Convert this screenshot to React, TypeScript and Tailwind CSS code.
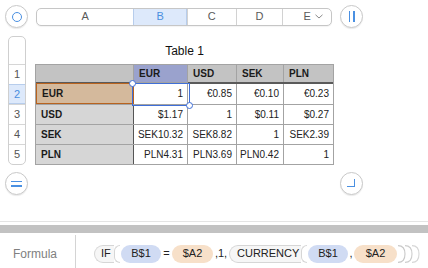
import React from "react";

function CircleBtn({ children, className = "" }: { children: React.ReactNode; className?: string }) {
  return (
    <div
      className={
        "w-[23px] h-[23px] rounded-full border border-[#c9c9c9] bg-white shadow-[0_1px_1px_rgba(0,0,0,0.08)] flex items-center justify-center shrink-0 " +
        className
      }
    >
      {children}
    </div>
  );
}

const cols = ["A", "B", "C", "D", "E"];
const colW = ["w-[97px]", "w-[54px]", "w-[49px]", "w-[47px]", "w-[49px]"];

const header = ["", "EUR", "USD", "SEK", "PLN"];
const rows = [
  ["EUR", "1", "€0.85", "€0.10", "€0.23"],
  ["USD", "$1.17", "1", "$0.11", "$0.27"],
  ["SEK", "SEK10.32", "SEK8.82", "1", "SEK2.39"],
  ["PLN", "PLN4.31", "PLN3.69", "PLN0.42", "1"],
];
const tcols = "grid grid-cols-[98px_54px_49px_47px_49px]";

function OpenParen() {
  return <span className="w-[6px] h-[18px] border border-r-0 border-[#d6d6d6] rounded-l-full bg-white shrink-0" />;
}

export default function App() {
  return (
    <div className="w-[428px] h-[268px] bg-white flex flex-col overflow-hidden font-['Liberation_Sans',Arial,sans-serif] text-[#1a1a1a]">
      <div className="h-[221px] shrink-0 flex flex-col">
        {/* top bar */}
        <div className="flex items-center pt-[5px] pl-[5px]">
          <CircleBtn>
            <div className="w-[10px] h-[10px] rounded-full border-[1.5px] border-[#4a90e2]" />
          </CircleBtn>
          <div className="ml-[8px] w-[296px] h-[18px] rounded-[5px] border border-[#c6c6c6] bg-white flex text-[11px] text-[#5a5a5a] overflow-hidden shadow-[0_1px_1px_rgba(0,0,0,0.05)]">
            {cols.map((c, i) => (
              <div
                key={c}
                className={
                  colW[i] +
                  " h-full flex items-center justify-center leading-none " +
                  (i > 0 ? "border-l border-[#d2d2d2] " : "") +
                  (c === "B" ? "bg-[#dde9fb] text-[#4a8fe0] border-l-[#b7cdec] border-r border-r-[#b7cdec]" : "")
                }
              >
                {c === "E" ? (
                  <span className="flex items-center gap-[4px] pl-[12px]">
                    E
                    <svg width="8" height="5" viewBox="0 0 8 5">
                      <path d="M0.5 0.8 L4 4 L7.5 0.8" fill="none" stroke="#8a8a8a" strokeWidth="1" />
                    </svg>
                  </span>
                ) : (
                  c
                )}
              </div>
            ))}
          </div>
          <CircleBtn className="ml-[8px]">
            <div className="flex gap-[3px]">
              <div className="w-[1.5px] h-[11px] bg-[#4a90e2]" />
              <div className="w-[1.5px] h-[11px] bg-[#4a90e2]" />
            </div>
          </CircleBtn>
        </div>

        {/* body */}
        <div className="flex pl-[8px] mt-[8px]">
          {/* row headers */}
          <div className="w-[18px] rounded-[5px] border border-[#cfcfcf] bg-white flex flex-col text-[11px] text-[#555] overflow-hidden">
            <div className="h-[27px]" />
            {[1, 2, 3, 4, 5].map((n) => (
              <div
                key={n}
                className={
                  "h-[20px] flex items-center justify-center border-t leading-none " +
                  (n === 2
                    ? "bg-[#dde9fb] text-[#4a8fe0] border-[#b7cdec] border-b border-b-[#b7cdec]"
                    : "border-[#d6d6d6]")
                }
              >
                {n}
              </div>
            ))}
          </div>

          {/* table */}
          <div className="ml-[9px] flex flex-col">
            <div className="h-[28px] flex items-center justify-center text-[12px] text-[#111] pt-[1px]">Table 1</div>
            <div className="relative border border-[#a3a3a3] text-[10px] leading-none">
              <div className={tcols + " h-[19px] bg-[#c3c3c3] border-b-2 border-[#5a5a5a]"}>
                {header.map((h, i) => (
                  <div
                    key={i}
                    className={
                      "flex items-center pl-[5px] font-bold " +
                      (i < 4 ? "border-r border-[#a3a3a3] " : "") +
                      (i === 1 ? "bg-[#9aa2cd] border border-[#3a5fd6] -my-[1px] -ml-[1px]" : "")
                    }
                  >
                    {h}
                  </div>
                ))}
              </div>
              {rows.map((r, ri) => (
                <div key={ri} className={tcols + " h-[20px] " + (ri > 0 ? "border-t border-[#a3a3a3]" : "")}>
                  {r.map((v, ci) => (
                    <div
                      key={ci}
                      className={
                        ci === 0
                          ? "flex items-center pl-[5px] font-bold border-r border-[#555] " +
                            (ri === 0 ? "bg-[#d4b99c] border border-[#b8631f] -mt-[1px]" : "bg-[#d6d6d6]")
                          : "flex items-center justify-end pr-[4px] text-[#222] bg-white " +
                            (ci < 4 ? "border-r border-[#a3a3a3]" : "")
                      }
                    >
                      {v}
                    </div>
                  ))}
                </div>
              ))}
              {/* selection */}
              <div className="absolute left-[96px] top-[18px] w-[58px] h-[23px] border border-[#3f6fd8] pointer-events-none">
                <div className="absolute -left-[4px] -top-[4px] w-[7px] h-[7px] rounded-full bg-white border border-[#3f6fd8]" />
                <div className="absolute -right-[4px] -bottom-[4px] w-[7px] h-[7px] rounded-full bg-white border border-[#3f6fd8]" />
              </div>
            </div>
          </div>
        </div>

        {/* bottom buttons */}
        <div className="flex pl-[5px] mt-[7px]">
          <CircleBtn>
            <div className="flex flex-col gap-[3px]">
              <div className="w-[11px] h-[1.5px] bg-[#4a90e2]" />
              <div className="w-[11px] h-[1.5px] bg-[#4a90e2]" />
            </div>
          </CircleBtn>
          <CircleBtn className="ml-[312px]">
            <div className="w-[8px] h-[8px] border-r-[1.5px] border-b-[1.5px] border-[#4a90e2] -mt-[1px] -ml-[1px]" />
          </CircleBtn>
        </div>
      </div>

      {/* divider lines */}
      <div className="h-[1px] shrink-0 bg-[#e4e4e4]" />
      <div className="h-[3px] shrink-0" />
      <div className="h-[8px] shrink-0 bg-[#c2c2c2]" />

      {/* formula bar */}
      <div className="flex-1 flex items-stretch">
        <div className="w-[76px] shrink-0 border-r border-[#d4d4d4] mt-[2px] flex items-center pl-[13px] pt-[5px] text-[12px] text-[#808080]">
          Formula
        </div>
        <div className="flex items-center pl-[18px] pt-[6px] text-[11px] text-[#222] leading-none whitespace-nowrap">
          <div className="flex items-center shrink-0">
            <span className="h-[18px] w-[20px] pl-[6px] flex items-center border border-r-0 border-[#d6d6d6] rounded-l-full bg-[#f6f6f6]">IF</span>
            <OpenParen />
          </div>
          <span className="h-[18px] w-[40px] ml-[1px] shrink-0 rounded-full bg-[#d0dbf3] flex items-center justify-center">B$1</span>
          <span className="w-[11px] shrink-0 text-center">=</span>
          <span className="h-[18px] w-[41px] shrink-0 rounded-full bg-[#f7e0c9] flex items-center justify-center">$A2</span>
          <span className="w-[16px] shrink-0 text-center">,1,</span>
          <div className="flex items-center shrink-0">
            <span className="h-[18px] w-[72px] pl-[7px] flex items-center border border-r-0 border-[#d6d6d6] rounded-l-full bg-[#f6f6f6]">CURRENCY</span>
            <OpenParen />
          </div>
          <span className="h-[18px] w-[40px] ml-[1px] shrink-0 rounded-full bg-[#d0dbf3] flex items-center justify-center">B$1</span>
          <span className="w-[6px] shrink-0 text-center">,</span>
          <span className="h-[18px] w-[43px] shrink-0 rounded-full bg-[#f7e0c9] flex items-center justify-center">$A2</span>
          <svg width="24" height="18" viewBox="0 0 24 18" className="shrink-0 block">
            <path d="M1 0.6 Q8 0.6 8 9 Q8 17.4 1 17.4" fill="none" stroke="#c8c8c8" strokeWidth="1.1" />
            <path d="M8 0.6 Q15 0.6 15 9 Q15 17.4 8 17.4" fill="none" stroke="#cdcdcd" strokeWidth="1.1" />
            <path d="M15 0.6 Q22 0.6 22 9 Q22 17.4 15 17.4" fill="none" stroke="#d6d6d6" strokeWidth="1.1" />
          </svg>
        </div>
      </div>
    </div>
  );
}
